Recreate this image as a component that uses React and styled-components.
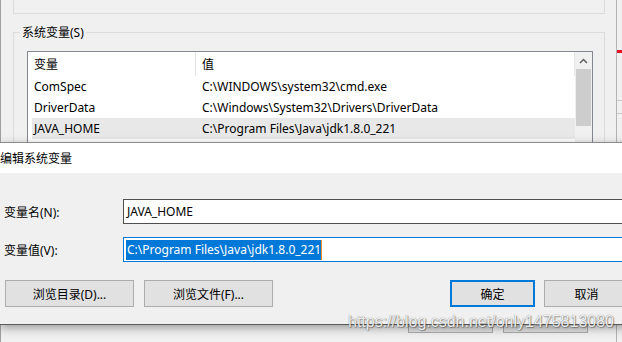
import styled, { createGlobalStyle } from "styled-components";

const Global = createGlobalStyle`
  *, *::before, *::after {
    box-sizing: border-box;
  }
  html, body {
    margin: 0;
    padding: 0;
    overflow: hidden;
  }
  body {
    font-family: "Noto Sans", "Noto Sans CJK SC", sans-serif;
    font-size: 12px;
    color: #000;
  }
`;

const Desktop = styled.div`
  position: relative;
  width: 622px;
  height: 342px;
  overflow: hidden;
  display: flex;
  background: #f0f0f0;
`;

const BackWindow = styled.div`
  width: 617px;
  height: 342px;
  border-left: 1px solid #a0a0a0;
  border-right: 1px solid #b4b4b4;
  display: flex;
  flex-direction: column;
  flex-shrink: 0;
`;

const FarStrip = styled.div`
  flex: 1;
  display: flex;
  flex-direction: column;
`;

const RedMark = styled.div`
  margin-top: 50px;
  height: 3px;
  background: #e81123;
`;

const FarLine = styled.div`
  margin-top: ${(p) => p.top}px;
  height: 1px;
  background: #c8c8c8;
`;

const TopStub = styled.div`
  margin-left: 12px;
  width: 592px;
  height: 14px;
  border: 1px solid #dcdcdc;
  border-top: none;
`;

const GroupBox = styled.fieldset`
  margin: 10px 0 0 12px;
  width: 592px;
  padding: 10px 11px 0 13px;
  border: 1px solid #dcdcdc;
  height: 170px;
`;

const Legend = styled.legend`
  margin-left: -7px;
  padding: 0 2px;
  line-height: 17px;
`;

const ListBox = styled.div`
  display: flex;
  height: 130px;
  border: 1px solid #828790;
  background: #fff;
`;

const Table = styled.div`
  flex: 1;
  display: flex;
  flex-direction: column;
`;

const Header = styled.div`
  display: flex;
  height: 24px;
  border-right: 1px solid #e5e5e5;
`;

const HeadCell = styled.div`
  display: flex;
  align-items: center;
  width: ${(p) => (p.w ? `${p.w}px` : "auto")};
  flex: ${(p) => (p.w ? "none" : 1)};
  padding-left: ${(p) => p.pad}px;
  border-right: ${(p) => (p.sep ? "1px solid #e5e5e5" : "none")};
`;

const Row = styled.div`
  display: flex;
  align-items: center;
  height: 21px;
  margin-left: 4px;
  background: ${(p) => (p.active ? "#e8e8e8" : "transparent")};
`;

const Cell = styled.div`
  width: ${(p) => (p.w ? `${p.w}px` : "auto")};
  flex: ${(p) => (p.w ? "none" : 1)};
  padding-left: ${(p) => p.pad}px;
  white-space: nowrap;
`;

const ScrollBar = styled.div`
  width: 17px;
  background: #f0f0f0;
  display: flex;
  flex-direction: column;
  align-items: center;
`;

const ArrowBox = styled.div`
  height: 17px;
  display: flex;
  align-items: center;
  justify-content: center;
`;

const Thumb = styled.div`
  width: 15px;
  height: 57px;
  background: #cdcdcd;
`;

const BackFooter = styled.div`
  margin-top: auto;
  height: 32px;
  display: flex;
  justify-content: flex-end;
  align-items: flex-start;
  gap: 10px;
  padding-right: 28px;
`;

const GhostButton = styled.div`
  width: 85px;
  height: 23px;
  border: 1px solid #adadad;
  background: #e1e1e1;
`;

const Dialog = styled.div`
  position: absolute;
  top: 142px;
  left: 0;
  width: 640px;
  height: 183px;
  border-top: 1px solid #8c8c8c;
  border-bottom: 1px solid #5a5a5a;
  display: flex;
  flex-direction: column;
  box-shadow: 0 3px 9px rgba(0, 0, 0, 0.35);
`;

const TitleBar = styled.div`
  height: 30px;
  background: #fff;
  display: flex;
  align-items: center;
  flex-shrink: 0;
`;

const Body = styled.div`
  flex: 1;
  background: #f0f0f0;
  padding-top: 26px;
  display: flex;
  flex-direction: column;
`;

const FieldRow = styled.div`
  display: flex;
  align-items: center;
  margin-bottom: 13px;
`;

const Label = styled.div`
  width: 123px;
  padding-left: 4px;
`;

const Input = styled.div`
  flex: 1;
  height: 25px;
  background: #fff;
  border: 1px solid ${(p) => (p.focused ? "#0078d7" : "#505050")};
  display: flex;
  align-items: center;
  padding-left: ${(p) => (p.focused ? "2px" : "3px")};
  white-space: nowrap;
`;

const Selection = styled.span`
  background: #0078d7;
  color: #fff;
  padding: 0 0 0 1px;
  line-height: 20px;
  border-right: 1px solid #f7911e;
`;

const ButtonRow = styled.div`
  display: flex;
  justify-content: space-between;
  padding: 5px 11px 0 5px;
`;

const ButtonGroup = styled.div`
  display: flex;
  gap: ${(p) => p.gap}px;
`;

const Button = styled.div`
  width: ${(p) => p.w}px;
  height: 27px;
  background: #e1e1e1;
  border: ${(p) => (p.primary ? "2px solid #0078d7" : "1px solid #adadad")};
  display: flex;
  align-items: center;
  justify-content: center;
`;

const Watermark = styled.div`
  position: absolute;
  left: 348px;
  top: 312px;
  font-family: "Liberation Sans", Arial, sans-serif;
  font-size: 16px;
  line-height: 20px;
  color: rgba(255, 255, 255, 0.9);
  text-shadow: 0 0 1px rgba(0, 0, 0, 0.55), 1px 1px 1px rgba(0, 0, 0, 0.3);
  white-space: nowrap;
`;

const rows = [
  { name: "ComSpec", value: "C:\\WINDOWS\\system32\\cmd.exe" },
  { name: "DriverData", value: "C:\\Windows\\System32\\Drivers\\DriverData" },
  { name: "JAVA_HOME", value: "C:\\Program Files\\Java\\jdk1.8.0_221", active: true },
];

export default function App() {
  return (
    <>
      <Global />
      <Desktop>
        <BackWindow>
          <TopStub />
          <GroupBox>
            <Legend>系统变量(S)</Legend>
            <ListBox>
              <Table>
                <Header>
                  <HeadCell w={168} pad={6} sep>
                    变量
                  </HeadCell>
                  <HeadCell pad={6}>值</HeadCell>
                </Header>
                {rows.map((r) => (
                  <Row key={r.name} active={r.active}>
                    <Cell w={164} pad={2}>
                      {r.name}
                    </Cell>
                    <Cell pad={6}>{r.value}</Cell>
                  </Row>
                ))}
              </Table>
              <ScrollBar>
                <ArrowBox>
                  <svg width="9" height="6" viewBox="0 0 9 6">
                    <path d="M1 5 L4.5 1.5 L8 5" fill="none" stroke="#606060" strokeWidth="1.5" />
                  </svg>
                </ArrowBox>
                <Thumb />
              </ScrollBar>
            </ListBox>
          </GroupBox>
          <BackFooter>
            <GhostButton />
            <GhostButton />
          </BackFooter>
        </BackWindow>
        <FarStrip>
          <RedMark />
          <FarLine top={47} />
          <FarLine top={12} />
        </FarStrip>

        <Dialog>
          <TitleBar>编辑系统变量</TitleBar>
          <Body>
            <FieldRow>
              <Label>变量名(N):</Label>
              <Input>JAVA_HOME</Input>
            </FieldRow>
            <FieldRow>
              <Label>变量值(V):</Label>
              <Input focused>
                <Selection>C:\Program Files\Java\jdk1.8.0_221</Selection>
              </Input>
            </FieldRow>
            <ButtonRow>
              <ButtonGroup gap={10}>
                <Button w={129}>浏览目录(D)...</Button>
                <Button w={129}>浏览文件(F)...</Button>
              </ButtonGroup>
              <ButtonGroup gap={9}>
                <Button w={85} primary>
                  确定
                </Button>
                <Button w={85}>取消</Button>
              </ButtonGroup>
            </ButtonRow>
          </Body>
        </Dialog>
        <Watermark>https://blog.csdn.net/only1475813080</Watermark>
      </Desktop>
    </>
  );
}
